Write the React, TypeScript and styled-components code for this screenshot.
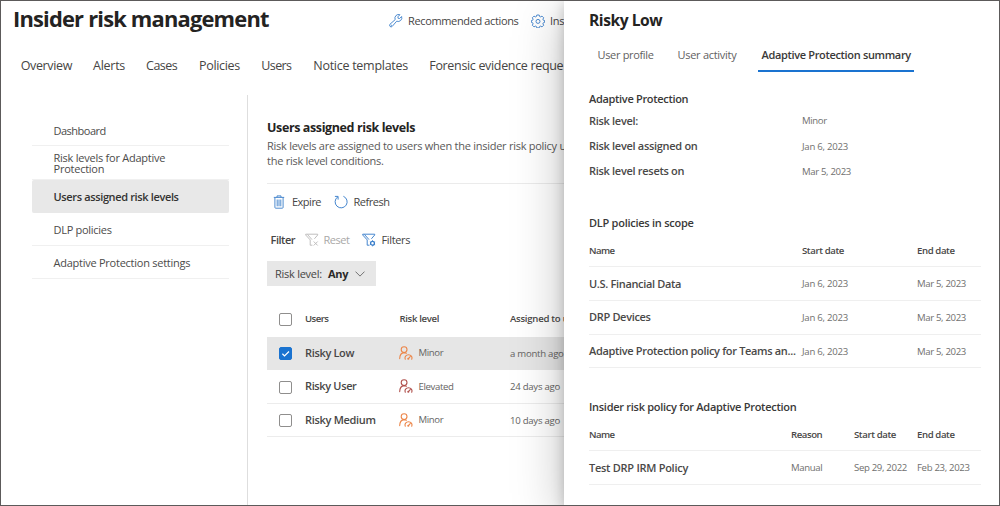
import React from 'react';
import styled, { createGlobalStyle } from 'styled-components';

const GlobalStyle = createGlobalStyle`
  *, *::before, *::after { box-sizing: border-box; }
  body { margin: 0; background: #fff; }
`;

const blue = '#3b7fcb';

const Shell = styled.div`
  display: flex;
  width: 1000px;
  height: 506px;
  border: 1px solid #5c5a5a;
  background: #fff;
  color: #464544;
  font-family: 'Open Sans', 'Noto Sans', sans-serif;
  font-size: 11px;
  overflow: hidden;
  white-space: nowrap;
`;

const Content = styled.div`
  display: flex;
  flex-direction: column;
  width: 563px;
  overflow: hidden;
`;

const Text = styled.span<{ $ls?: number }>`
  letter-spacing: ${(p) => p.$ls ?? -0.36}px;
`;

const Header = styled.header`
  display: flex;
  align-items: center;
  height: 36px;
  padding-left: 12px;
  flex: none;
`;

const PageTitle = styled.h1`
  margin: 0;
  width: 376px;
  flex: none;
  font-size: 21.9px;
  line-height: 30px;
  font-weight: 700;
  letter-spacing: -0.81px;
  color: #242322;
`;

const HeaderAction = styled.div<{ $width?: number }>`
  display: flex;
  align-items: center;
  gap: 5px;
  width: ${(p) => (p.$width ? `${p.$width}px` : 'auto')};
  flex: none;
  padding-top: 3px;
  svg { flex: none; }
`;

const Nav = styled.nav`
  display: grid;
  grid-template-columns: 72.3px 53px 53px 62.3px 52px 116px auto;
  align-items: center;
  height: 58px;
  padding: 0 0 1.5px 19.7px;
  flex: none;
  font-size: 12.5px;
`;

const Body = styled.div`
  display: flex;
  flex: 1;
`;

const Sidebar = styled.aside`
  width: 247px;
  flex: none;
  padding: 18.2px 18px 0 30.5px;
  border-right: 1px solid #dedede;
`;

const SideItem = styled.div<{ $selected?: boolean }>`
  display: flex;
  align-items: center;
  height: 33.2px;
  padding: 1.9px 0 0 22px;
  line-height: 11px;
  white-space: pre-line;
  border-bottom: 1px solid ${(p) => (p.$selected ? '#e8e8e8' : '#f0f0f0')};
  border-radius: ${(p) => (p.$selected ? '2px' : '0')};
  background: ${(p) => (p.$selected ? '#e8e8e8' : 'transparent')};
  color: ${(p) => (p.$selected ? '#343332' : '#4c4b4a')};
  font-weight: ${(p) => (p.$selected ? 600 : 400)};
`;

const Main = styled.main`
  flex: 1;
  padding: 24px 0 0 19px;
`;

const Heading = styled.h2`
  margin: 0 0 3px;
  font-size: 12.5px;
  line-height: 17px;
  font-weight: 700;
  letter-spacing: -0.39px;
  color: #242322;
`;

const Description = styled.p`
  margin: 0;
  padding-bottom: 14.4px;
  line-height: 14.8px;
  letter-spacing: -0.26px;
  border-bottom: 1px solid #ebebeb;
  color: #5a5958;
  white-space: pre;
`;

const Toolbar = styled.div`
  display: flex;
  align-items: center;
  height: 37px;
  padding: 0 0 1px 6px;
`;

const ToolButton = styled.div<{ $width: number; $gap: number; $disabled?: boolean }>`
  display: flex;
  align-items: center;
  gap: ${(p) => p.$gap}px;
  width: ${(p) => p.$width}px;
  color: ${(p) => (p.$disabled ? '#a9a8a7' : 'inherit')};
  svg { flex: none; }
`;

const FilterBar = styled.div`
  display: flex;
  align-items: center;
  height: 38px;
  padding-left: 3.5px;
`;

const FilterLabel = styled.div`
  width: 34px;
  font-weight: 600;
  letter-spacing: -0.47px;
`;

const Pill = styled.div`
  display: flex;
  align-items: center;
  width: 109px;
  height: 25px;
  margin: 2.5px 0 15.5px;
  padding: 0 0 0 8px;
  background: #e7e7e7;
  strong { margin-left: 6px; font-weight: 700; color: #2b2a29; letter-spacing: -0.28px; }
  svg { margin-left: 7px; }
`;

const UserRow = styled.div<{ $head?: boolean; $selected?: boolean }>`
  display: grid;
  grid-template-columns: 26px 94.5px 110.5px auto;
  align-items: center;
  height: ${(p) => (p.$head ? 35 : 33.5)}px;
  padding-left: 12px;
  background: ${(p) => (p.$selected ? '#e6e6e6' : 'transparent')};
  border-bottom: 1px solid ${(p) => (p.$head ? 'transparent' : p.$selected ? '#e6e6e6' : '#ececec')};
  font-size: 9.6px;
  font-weight: ${(p) => (p.$head ? 600 : 400)};
  color: ${(p) => (p.$head ? '#4a4948' : '#656463')};
`;

const Checkbox = styled.span<{ $checked?: boolean }>`
  display: flex;
  width: 13.4px;
  height: 13.4px;
  margin-top: 1px;
  border-radius: 2px;
  border: 1px solid ${(p) => (p.$checked ? '#1a73d0' : '#8f8e8d')};
  background: ${(p) => (p.$checked ? '#1a73d0' : '#fff')};
`;

const UserName = styled.span<{ $ls: number }>`
  padding-bottom: 1.6px;
  font-size: 11px;
  font-weight: 600;
  letter-spacing: ${(p) => p.$ls}px;
  color: #484746;
`;

const Risk = styled.span`
  display: flex;
  align-items: center;
  gap: 5.5px;
  margin-left: -0.5px;
  padding-bottom: 1.4px;
`;

const Panel = styled.section`
  position: relative;
  flex: 1;
  padding: 0 18px 0 25px;
  background: #fff;
  box-shadow: 0 12px 48px rgba(0, 0, 0, 0.26), 0 3px 12px rgba(0, 0, 0, 0.2);
`;

const PanelTitle = styled.h2`
  margin: 0;
  height: 38px;
  line-height: 38px;
  font-size: 15.6px;
  font-weight: 700;
  letter-spacing: -0.46px;
  color: #242322;
`;

const Tabs = styled.div`
  display: flex;
  height: 33px;
`;

const Tab = styled.div<{ $width: number; $pad: number; $active?: boolean }>`
  width: ${(p) => p.$width}px;
  padding: 1px 0 0 ${(p) => p.$pad}px;
  line-height: 30px;
  color: ${(p) => (p.$active ? '#3a3938' : '#62615f')};
  font-weight: ${(p) => (p.$active ? 600 : 400)};
  border-bottom: 2px solid ${(p) => (p.$active ? '#1a73d0' : 'transparent')};
`;

const SectionTitle = styled.h3<{ $top: number; $height: number; $ls: number }>`
  margin: ${(p) => p.$top}px 0 0;
  height: ${(p) => p.$height}px;
  line-height: 18px;
  font-size: 11px;
  font-weight: 600;
  letter-spacing: ${(p) => p.$ls}px;
  color: #3a3938;
`;

const Fact = styled.div`
  display: grid;
  grid-template-columns: 213px auto;
  align-items: center;
  height: 25.2px;
`;

const Strong = styled.span<{ $ls: number }>`
  padding-bottom: 1.2px;
  font-size: 11px;
  font-weight: 600;
  letter-spacing: ${(p) => p.$ls}px;
  color: #4a4948;
`;

const Small = styled.span<{ $ls: number }>`
  font-size: 9.6px;
  letter-spacing: ${(p) => p.$ls}px;
  color: #706f6e;
`;

const PolicyRow = styled.div<{ $columns: string; $head?: boolean }>`
  display: grid;
  grid-template-columns: ${(p) => p.$columns};
  align-items: center;
  height: 33.7px;
  border-bottom: 1px solid #efefef;
  font-size: 9.6px;
  font-weight: 600;
  color: #484746;
  ${Small} { font-weight: 400; }
`;

const WrenchIcon = () => (
  <svg width="14" height="14" viewBox="0 0 14 14" fill="none" stroke={blue} strokeWidth="0.9" strokeLinejoin="round">
    <path d="M12.6 2.5a3.7 3.7 0 0 1-4.9 4.7L3.2 12.4a1.55 1.55 0 0 1-2.2-2.2L6.2 5.6A3.7 3.7 0 0 1 10.9.7L8.9 2.8l.2 1.5 1.5.2z" />
    <circle cx="2.2" cy="11.3" r=".25" />
  </svg>
);

const GearIcon = () => (
  <svg width="14" height="14" viewBox="0 0 14 14" fill="none" stroke={blue} strokeWidth="0.9" strokeLinejoin="round">
    <path d="M5.8 1h2.4l.4 1.5 1 .4 1.4-.8 1.7 1.7-.8 1.4.4 1 1.3.3v1.9l-1.3.4-.4 1 .8 1.4-1.7 1.7-1.4-.8-1 .4-.4 1.4H5.8l-.4-1.4-1-.4-1.4.8-1.7-1.7.8-1.4-.4-1L.4 8.4V6.5l1.3-.3.4-1-.8-1.4L3 2.1l1.4.8 1-.4z" />
    <circle cx="7" cy="7.4" r="2" />
  </svg>
);

const TrashIcon = () => (
  <svg width="12" height="14" viewBox="0 0 12 14" fill="none" stroke={blue} strokeWidth="0.9">
    <path d="M.8 2.4h10.4M4 2.3V.9h4v1.4M1.9 2.5v9.9q0 .8.8.8h6.6q.8 0 .8-.8V2.5M4.2 4.5v6.8M6 4.5v6.8M7.8 4.5v6.8" />
  </svg>
);

const RefreshIcon = () => (
  <svg width="14" height="14" viewBox="0 0 14 14" fill="none" stroke={blue} strokeWidth="0.95">
    <path d="M9.4 1.3A6 6 0 1 1 3.6 2M.9 1.4h3.2v3.2" />
  </svg>
);

const FunnelIcon = ({ color, clear }: { color: string; clear?: boolean }) => (
  <svg width="14" height="14" viewBox="0 0 14 14" fill="none" stroke={color} strokeWidth="0.95" strokeLinejoin="round">
    <path d="M7.4 12.2H5.2V6.9L.7 2V1.2h12V2L9.4 5.8M2.5 1.5 7 6.6" />
    {clear ? (
      <path d="m8.7 8.5 4 4M12.7 8.5l-4 4" />
    ) : (
      <>
        <circle cx="10.5" cy="10.3" r="1.9" strokeWidth="1.3" />
        <path d="M10.5 7.3v1M10.5 12.3v1M7.9 8.8l.9.5M12.2 11.3l.9.5M13.1 8.8l-.9.5M8.8 11.3l-.9.5" />
      </>
    )}
  </svg>
);

const ChevronIcon = () => (
  <svg width="10" height="6" viewBox="0 0 10 6" fill="none" stroke="#555" strokeWidth="0.8">
    <path d="M.5.6 5 5.1 9.5.6" />
  </svg>
);

const CheckIcon = () => (
  <svg width="11.4" height="11.4" viewBox="0 0 11.4 11.4" fill="none" stroke="#fff" strokeWidth="1.2">
    <path d="m2.4 5.8 2.1 2.1L9 3.5" />
  </svg>
);

const RiskIcon = ({ color }: { color: string }) => (
  <svg width="14" height="14" viewBox="0 0 14 14" fill="none" stroke={color} strokeWidth="1.1" strokeLinecap="round">
    <circle cx="5.1" cy="3.6" r="2.9" />
    <path d="M.7 12.6C.8 9 2.5 6.8 5.1 6.6c1 0 1.7.2 2.3.6" />
    <path d="M6.3 13.2C5.3 10.8 7.1 8.7 9.5 8.7s4.2 2.1 3.2 4.5M9.5 12.5l1.7-1.9" />
    <circle cx="9.3" cy="12.7" r=".5" />
  </svg>
);

const sideItems = [
  { label: 'Dashboard', ls: -0.49 },
  { label: 'Risk levels for Adaptive\nProtection', ls: -0.24 },
  { label: 'Users assigned risk levels', ls: -0.36, selected: true },
  { label: 'DLP policies', ls: -0.28 },
  { label: 'Adaptive Protection settings', ls: -0.25 },
];

const navItems: [string, number][] = [
  ['Overview', -0.36],
  ['Alerts', -0.26],
  ['Cases', -0.48],
  ['Policies', -0.31],
  ['Users', -0.6],
  ['Notice templates', -0.27],
  ['Forensic evidence reque', -0.33],
];

const users = [
  { name: 'Risky Low', ls: -0.34, level: 'Minor', color: '#ec8548', when: 'a month ago', selected: true },
  { name: 'Risky User', ls: -0.36, level: 'Elevated', color: '#b0504c', when: '24 days ago' },
  { name: 'Risky Medium', ls: -0.31, level: 'Minor', color: '#ec8548', when: '10 days ago' },
];

const facts: [string, string, number][] = [
  ['Risk level:', 'Minor', -0.38],
  ['Risk level assigned on', 'Jan 6, 2023', -0.25],
  ['Risk level resets on', 'Mar 5, 2023', -0.35],
];

const policies: [string, number][] = [
  ['U.S. Financial Data', -0.33],
  ['DRP Devices', -0.33],
  ['Adaptive Protection policy for Teams an...', -0.33],
];

const scopeColumns = '213px 115px auto';
const riskColumns = '202px 63px 63px auto';

export default function App() {
  return (
    <Shell>
      <GlobalStyle />
      <Content>
        <Header>
          <PageTitle>Insider risk management</PageTitle>
          <HeaderAction $width={142}>
            <WrenchIcon />
            <Text>Recommended actions</Text>
          </HeaderAction>
          <HeaderAction>
            <GearIcon />
            <Text $ls={-0.3}>Ins</Text>
          </HeaderAction>
        </Header>
        <Nav>
          {navItems.map(([label, ls]) => (
            <Text key={label} $ls={ls}>{label}</Text>
          ))}
        </Nav>
        <Body>
          <Sidebar>
            {sideItems.map((item) => (
              <SideItem key={item.label} $selected={item.selected}>
                <Text $ls={item.ls}>{item.label}</Text>
              </SideItem>
            ))}
          </Sidebar>
          <Main>
            <Heading>Users assigned risk levels</Heading>
            <Description>
              {'Risk levels are assigned to users when the insider risk policy u\nthe risk level conditions.'}
            </Description>
            <Toolbar>
              <ToolButton $width={61} $gap={7}>
                <TrashIcon />
                <Text $ls={-0.5}>Expire</Text>
              </ToolButton>
              <ToolButton $width={80} $gap={5.5}>
                <RefreshIcon />
                <Text $ls={-0.48}>Refresh</Text>
              </ToolButton>
            </Toolbar>
            <FilterBar>
              <FilterLabel>Filter</FilterLabel>
              <ToolButton $width={57.5} $gap={5} $disabled>
                <FunnelIcon color="#bcbbba" clear />
                <Text $ls={-0.46}>Reset</Text>
              </ToolButton>
              <ToolButton $width={60} $gap={5.5}>
                <FunnelIcon color={blue} />
                <Text $ls={-0.35}>Filters</Text>
              </ToolButton>
            </FilterBar>
            <Pill>
              <Text $ls={-0.26}>Risk level:</Text>
              <strong>Any</strong>
              <ChevronIcon />
            </Pill>
            <UserRow $head>
              <Checkbox />
              <Text $ls={-0.55}>Users</Text>
              <Text $ls={-0.35}>Risk level</Text>
              <Text $ls={-0.27}>Assigned to u</Text>
            </UserRow>
            {users.map((user) => (
              <UserRow key={user.name} $selected={user.selected}>
                <Checkbox $checked={user.selected}>{user.selected && <CheckIcon />}</Checkbox>
                <UserName $ls={user.ls}>{user.name}</UserName>
                <Risk>
                  <RiskIcon color={user.color} />
                  <Text $ls={-0.37}>{user.level}</Text>
                </Risk>
                <Text $ls={-0.26}>{user.when}</Text>
              </UserRow>
            ))}
          </Main>
        </Body>
      </Content>
      <Panel>
        <PanelTitle>Risky Low</PanelTitle>
        <Tabs>
          <Tab $width={80} $pad={8.5}><Text $ls={-0.33}>User profile</Text></Tab>
          <Tab $width={89} $pad={8.5}><Text $ls={-0.28}>User activity</Text></Tab>
          <Tab $width={155.5} $pad={3.5} $active><Text $ls={-0.34}>Adaptive Protection summary</Text></Tab>
        </Tabs>
        <SectionTitle $top={18} $height={18.3} $ls={-0.32}>Adaptive Protection</SectionTitle>
        {facts.map(([label, value, ls]) => (
          <Fact key={label}>
            <Strong $ls={-0.3}>{label}</Strong>
            <Small $ls={ls}>{value}</Small>
          </Fact>
        ))}
        <SectionTitle $top={30.2} $height={19.7} $ls={-0.26}>DLP policies in scope</SectionTitle>
        <PolicyRow $columns={scopeColumns} $head>
          <Text $ls={-0.55}>Name</Text>
          <Text $ls={-0.4}>Start date</Text>
          <Text $ls={-0.4}>End date</Text>
        </PolicyRow>
        {policies.map(([name, ls]) => (
          <PolicyRow key={name} $columns={scopeColumns}>
            <Strong $ls={ls}>{name}</Strong>
            <Small $ls={-0.25}>Jan 6, 2023</Small>
            <Small $ls={-0.35}>Mar 5, 2023</Small>
          </PolicyRow>
        ))}
        <SectionTitle $top={29.3} $height={20} $ls={-0.28}>Insider risk policy for Adaptive Protection</SectionTitle>
        <PolicyRow $columns={riskColumns} $head>
          <Text $ls={-0.55}>Name</Text>
          <Text $ls={-0.44}>Reason</Text>
          <Text $ls={-0.4}>Start date</Text>
          <Text $ls={-0.4}>End date</Text>
        </PolicyRow>
        <PolicyRow $columns={riskColumns}>
          <Strong $ls={-0.27}>Test DRP IRM Policy</Strong>
          <Small $ls={-0.37}>Manual</Small>
          <Small $ls={-0.33}>Sep 29, 2022</Small>
          <Small $ls={-0.33}>Feb 23, 2023</Small>
        </PolicyRow>
      </Panel>
    </Shell>
  );
}
